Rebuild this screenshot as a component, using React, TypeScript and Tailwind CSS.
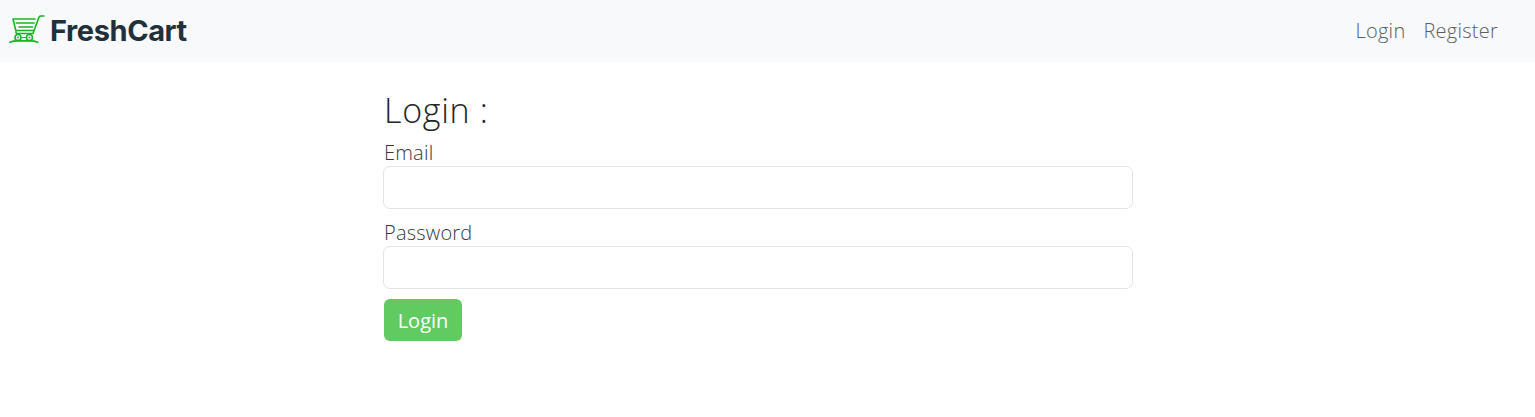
import React from "react";

function CartIcon() {
  return (
    <svg
      className="mt-[15px] h-7 w-9"
      viewBox="0 0 36 28"
      fill="none"
      stroke="#17b51f"
      strokeWidth="1.6"
      strokeLinecap="round"
      strokeLinejoin="round"
    >
      <path d="M35 1h-3.200c-1 0-1.500.3-1.900 1.300L24 18.500H8.500c-1.200 0-1.800-.6-1.500-1.800" />
      <path d="M26 4H4l2.800 11.500h17.500" />
      <path d="M7.200 8h18M10 12h13.500" strokeWidth="1.500" />
      <path d="M.8 27.200c2.500-1 5-1.300 8-1.300h12c3 0 5.500.3 8 1.300" />
      <circle cx="9" cy="22.500" r="3" />
      <circle cx="20.500" cy="22.500" r="3" />
      <circle cx="9" cy="22.500" r="0.400" strokeWidth="1.200" />
      <circle cx="20.500" cy="22.500" r="0.400" strokeWidth="1.200" />
      <path d="M13 22.500h3.500" strokeWidth="1" />
    </svg>
  );
}

function Field({ id, label, type }: { id: string; label: string; type: string }) {
  return (
    <div className="mb-[10px] flex flex-col">
      <label htmlFor={id} className="h-[27px] pl-px text-[20px] leading-[27px] tracking-[0.2px] text-[#34383c]">
        {label}
      </label>
      <input
        id={id}
        type={type}
        className="h-[43px] w-full rounded-[7px] border border-[#e1e5e8] bg-white px-3 outline-none"
      />
    </div>
  );
}

export default function App() {
  return (
    <div className="min-h-[417px] bg-white font-['Open_Sans',sans-serif] font-light text-[#212529]">
      <nav className="flex h-[62px] items-start justify-between bg-[#f8f9fb] pr-[37px] pl-[9px]">
        <a href="#" className="flex items-start gap-[4px]">
          <CartIcon />
          <span className="mt-[13px] pl-px font-['Inter',sans-serif] text-[29px] leading-[36px] font-bold tracking-[-0.4px] text-[#21313c]">
            FreshCart
          </span>
        </a>
        <div className="mt-[17px] flex gap-[18px] text-[20px] leading-[27px] tracking-[0.250px] text-[#5b5d5f]">
          <a href="#">Login</a>
          <a href="#">Register</a>
        </div>
      </nav>
      <main className="ml-[383px] w-[750px] pt-[27px]">
        <h1 className="mb-[8px] h-[42px] pl-px text-[34px] leading-[42px] tracking-[0.700px]">Login :</h1>
        <form onSubmit={(e) => e.preventDefault()}>
          <Field id="email" label="Email" type="email" />
          <Field id="password" label="Password" type="password" />
          <button className="ml-px h-[42px] w-[78px] rounded-[6px] bg-[#61ca61] text-[20px] leading-[27px] font-normal text-white">
            Login
          </button>
        </form>
      </main>
    </div>
  );
}
